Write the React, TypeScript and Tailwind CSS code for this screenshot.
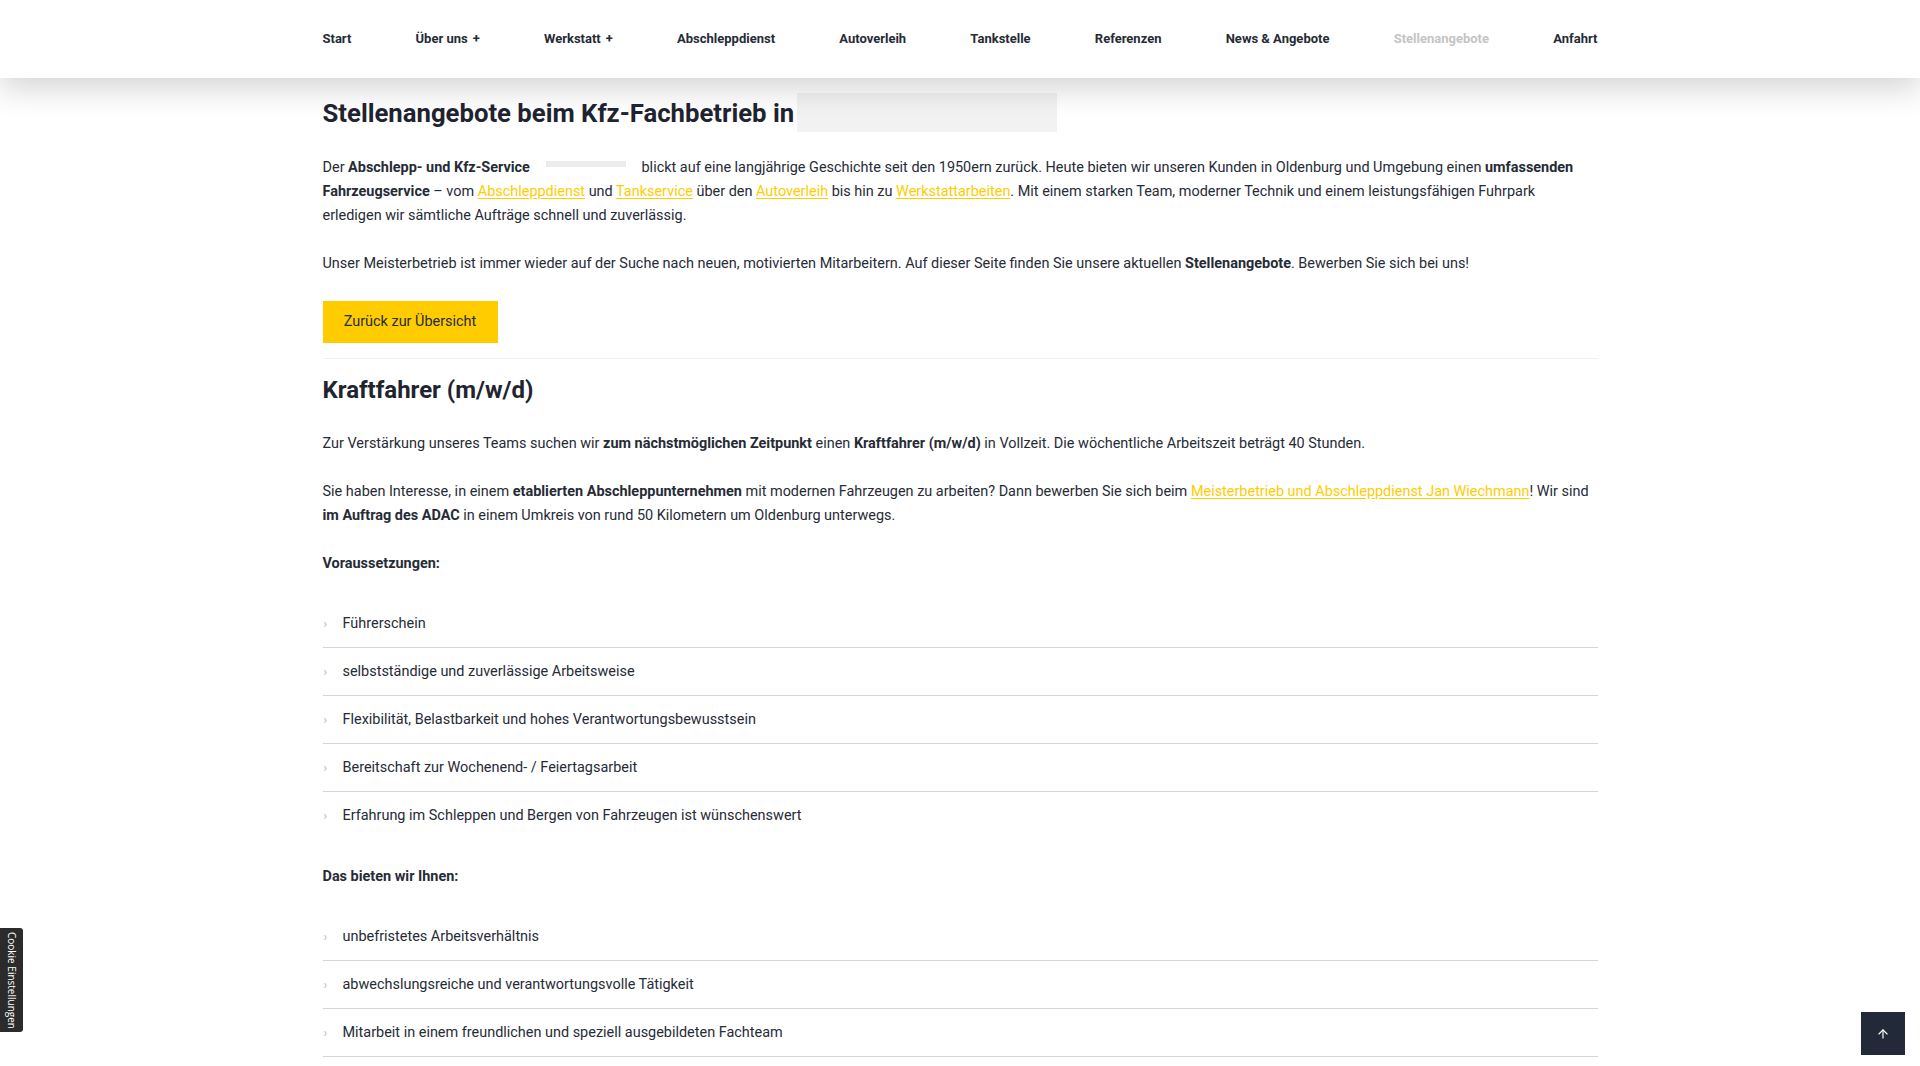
import { ArrowUp } from 'lucide-react'

const navItems = [
  { label: 'Start' },
  { label: 'Über uns', plus: true },
  { label: 'Werkstatt', plus: true },
  { label: 'Abschleppdienst' },
  { label: 'Autoverleih' },
  { label: 'Tankstelle' },
  { label: 'Referenzen' },
  { label: 'News & Angebote' },
  { label: 'Stellenangebote', active: true },
  { label: 'Anfahrt' },
]

const requirements = [
  'Führerschein',
  'selbstständige und zuverlässige Arbeitsweise',
  'Flexibilität, Belastbarkeit und hohes Verantwortungsbewusstsein',
  'Bereitschaft zur Wochenend- / Feiertagsarbeit',
  'Erfahrung im Schleppen und Bergen von Fahrzeugen ist wünschenswert',
]

const offers = [
  'unbefristetes Arbeitsverhältnis',
  'abwechslungsreiche und verantwortungsvolle Tätigkeit',
  'Mitarbeit in einem freundlichen und speziell ausgebildeten Fachteam',
]

function Link({ children }: { children: React.ReactNode }) {
  return <a href="#" className="text-[#ffcc00] underline underline-offset-2 decoration-[#ffcc00]">{children}</a>
}

function List({ items, lastBorder }: { items: string[]; lastBorder?: boolean }) {
  return (
    <ul>
      {items.map((item, i) => (
        <li
          key={item}
          className={`flex items-center pt-3 pb-[11px] ${i < items.length - 1 || lastBorder ? 'border-b border-[#d6d6d6]' : ''}`}
        >
          <span className="w-[20px] text-[12px] text-[#b5b5b5] leading-6 pl-[1px]">›</span>
          <span className="leading-6">{item}</span>
        </li>
      ))}
    </ul>
  )
}

export default function App() {
  return (
    <div className="min-h-screen bg-white text-[#262b36] text-[14.45px] font-['Roboto',sans-serif] overflow-hidden h-[1066px] relative">
      <header className="relative z-10 bg-white h-[78px] shadow-[0_12px_30px_rgba(0,0,0,0.16)]">
        <nav className="w-[1275px] mx-auto h-full flex items-center justify-between text-[13px] font-bold">
          {navItems.map(item => (
            <a
              key={item.label}
              href="#"
              className={item.active ? 'text-[#c4c4c4]' : 'text-[#262b36]'}
            >
              {item.label}
              {item.plus && <span className="ml-[5px]">+</span>}
            </a>
          ))}
        </nav>
      </header>

      <main className="w-[1275px] mx-auto pt-[15px]">
        <h1 className="text-[25.7px] leading-[36px] font-bold text-[#1f2430] mb-[24px] flex items-center">
          Stellenangebote beim Kfz-Fachbetrieb in
          <span className="inline-block ml-[3px] w-[260px] h-[39px] bg-[#f2f2f2]" />
        </h1>

        <p className="leading-6 mb-6">
          Der <b>Abschlepp- und Kfz-Service</b>
          <span className="inline-block align-top mt-[5px] ml-[16px] mr-[12px] w-[80px] h-[6px] bg-[#ececec]" />
          {' '}blickt auf eine langjährige Geschichte seit den 1950ern zurück. Heute bieten wir unseren Kunden in Oldenburg und Umgebung einen <b>umfassenden Fahrzeugservice</b> – vom <Link>Abschleppdienst</Link> und <Link>Tankservice</Link> über den <Link>Autoverleih</Link> bis hin zu <Link>Werkstattarbeiten</Link>. Mit einem starken Team, moderner Technik und einem leistungsfähigen Fuhrpark erledigen wir sämtliche Aufträge schnell und zuverlässig.
        </p>

        <p className="leading-6">
          Unser Meisterbetrieb ist immer wieder auf der Suche nach neuen, motivierten Mitarbeitern. Auf dieser Seite finden Sie unsere aktuellen <b>Stellenangebote</b>. Bewerben Sie sich bei uns!
        </p>

        <a href="#" className="mt-[25px] inline-flex items-center justify-center w-[175px] h-[42px] bg-[#ffcc00] text-[#262b36]">
          Zurück zur Übersicht
        </a>

        <div className="mt-[15px] border-t border-[#f0f0f0]" />

        <h2 className="mt-[15px] text-[24px] leading-8 font-bold text-[#1f2430]">Kraftfahrer (m/w/d)</h2>

        <p className="mt-[26px] leading-6 mb-6">
          Zur Verstärkung unseres Teams suchen wir <b>zum nächstmöglichen Zeitpunkt</b> einen <b>Kraftfahrer (m/w/d)</b> in Vollzeit. Die wöchentliche Arbeitszeit beträgt 40 Stunden.
        </p>

        <p className="leading-6 mb-6">
          Sie haben Interesse, in einem <b>etablierten Abschleppunternehmen</b> mit modernen Fahrzeugen zu arbeiten? Dann bewerben Sie sich beim <Link>Meisterbetrieb und Abschleppdienst Jan Wiechmann</Link>! Wir sind <b>im Auftrag des ADAC</b> in einem Umkreis von rund 50 Kilometern um Oldenburg unterwegs.
        </p>

        <p className="leading-6 font-bold mb-6">Voraussetzungen:</p>

        <List items={requirements} />

        <p className="leading-6 font-bold mt-[26px] mb-6">Das bieten wir Ihnen:</p>

        <List items={offers} lastBorder />
      </main>

      <button className="absolute left-0 top-[928px] w-[23px] h-[104px] bg-[#2b2b2b] rounded-r-[3px] flex items-center justify-center">
        <span className="[writing-mode:vertical-rl] text-[10px] text-white font-['Open_Sans',sans-serif] whitespace-nowrap">Cookie Einstellungen</span>
      </button>

      <button className="absolute right-[15px] top-[1012px] w-[44px] h-[43px] bg-[#222a3a] flex items-center justify-center">
        <ArrowUp className="w-[14px] h-[14px] text-white" strokeWidth={2} />
      </button>
    </div>
  )
}
